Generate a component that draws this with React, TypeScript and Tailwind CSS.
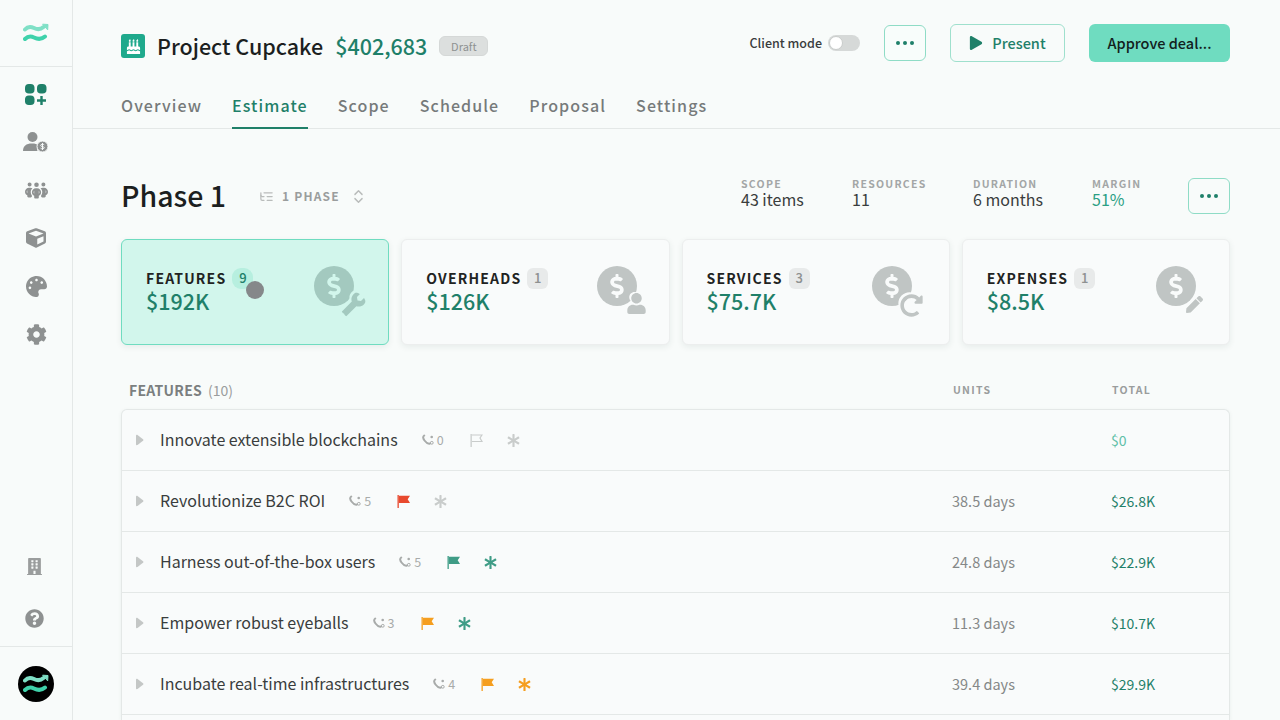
import { ReactNode } from 'react';
import { FaBuilding, FaCube, FaPalette, FaPen, FaPlay, FaAsterisk, FaUser, FaWrench, FaDollarSign } from 'react-icons/fa';
import { FaBirthdayCake, FaCog, FaQuestionCircle, FaRedoAlt } from 'react-icons/fa';
import { FaPeopleGroup } from 'react-icons/fa6';
import { LuChevronsUpDown, LuListTree } from 'react-icons/lu';

const font = 'font-["Noto_Sans_CJK_JP","Noto_Sans",sans-serif]';

const Waves = ({ className }: { className: string }) => (
  <svg viewBox="0 0 26 20" className={className} fill="none" strokeLinecap="round">
    <path d="M2 6.500c3-3.500 6-3 9-1.500s6 2 9.500-1" stroke="#7fe0c6" strokeWidth="4" />
    <path d="M20 1.200l5 .3-.3 5z" fill="#7fe0c6" stroke="#7fe0c6" strokeWidth="1" strokeLinejoin="round" />
    <path d="M2 16c3-3 6-3 9-1.500s7 2.500 11-1" stroke="#3fd2ab" strokeWidth="4" />
  </svg>
);

const UserDollar = () => (
  <svg viewBox="0 0 26 22" className="h-[22px] w-[26px]" fill="#8e9191">
    <circle cx="9.500" cy="6" r="5" />
    <path d="M0 20c0-5 3-7.500 9-7.500 3 0 5 .5 6.500 2-1.500 1.500-2 3.500-1 5.500z" />
    <circle cx="19.500" cy="15.500" r="5.500" stroke="#f8fbfa" strokeWidth="1" />
    <path d="M21.200 13.800c-.8-.8-3.500-.9-3.500.7s3.500.6 3.500 2.100-2.800 1.500-3.600.6M19.500 12v7" stroke="#f8fbfa" strokeWidth="1" fill="none" />
  </svg>
);

const GridPlus = () => (
  <svg viewBox="0 0 22 21" className="h-[21px] w-[22px]" fill="#1f8069">
    <rect x="0" y="0" width="9.500" height="9.500" rx="3.800" />
    <rect x="12" y="0" width="9.500" height="9.500" rx="3.800" />
    <rect x="0" y="11.500" width="9.500" height="9.500" rx="3.800" />
    <path d="M15.300 12h2.400v3.300H21v2.400h-3.300V21h-2.400v-3.300H12v-2.400h3.300z" />
  </svg>
);

const NavIcon = ({ children }: { children: ReactNode }) => (
  <div className="flex h-12 w-full items-center justify-center text-[22px] text-[#8e9191]">{children}</div>
);

const Sidebar = () => (
  <aside className="flex h-full w-[73px] shrink-0 flex-col border-r border-[#e4e8e7] bg-[#f8fbfa]">
    <div className="flex h-[67px] items-center justify-center border-b border-[#e4e8e7]">
      <Waves className="h-[20px] w-[26px]" />
    </div>
    <div className="flex flex-col pt-[3px]">
      <NavIcon>
        <GridPlus />
      </NavIcon>
      <NavIcon>
        <UserDollar />
      </NavIcon>
      <NavIcon>
        <FaPeopleGroup className="text-[23px]" />
      </NavIcon>
      <NavIcon>
        <FaCube className="text-[20px]" />
      </NavIcon>
      <NavIcon>
        <FaPalette className="text-[21px]" />
      </NavIcon>
      <NavIcon>
        <FaCog className="text-[21px]" />
      </NavIcon>
    </div>
    <div className="mt-auto flex flex-col items-center border-b border-[#e4e8e7]">
      <div className="flex h-[52px] w-full items-center justify-center pr-[3px] pb-[4px] text-[17px] text-[#9a9d9d]">
        <FaBuilding />
      </div>
      <div className="flex h-[52px] w-full items-center justify-center pr-[3px] pb-[4px] text-[19px] text-[#8e9191]">
        <FaQuestionCircle />
      </div>
    </div>
    <div className="flex h-[73px] items-center justify-center pr-[1px]">
      <div className="flex h-9 w-9 items-center justify-center rounded-full bg-black">
        <Waves className="h-[20px] w-[26px]" />
      </div>
    </div>
  </aside>
);

const Dots = ({ className }: { className: string }) => (
  <button className={`flex items-center justify-center gap-[3px] rounded-md border border-[#8fdcc6] ${className}`}>
    <span className="h-[4px] w-[4px] rounded-full bg-[#1f8069]" />
    <span className="h-[4px] w-[4px] rounded-full bg-[#1f8069]" />
    <span className="h-[4px] w-[4px] rounded-full bg-[#1f8069]" />
  </button>
);

const tabs = ['Overview', 'Estimate', 'Scope', 'Schedule', 'Proposal', 'Settings'];

const Header = () => (
  <header className="h-[129px] shrink-0 border-b border-[#e4e8e7] pr-[50px] pl-[48px]">
    <div className="flex h-[86px] items-center">
      <div className="mt-[6px] flex items-center">
        <div className="flex h-6 w-6 items-center justify-center rounded-[3px] bg-[#1fa98c] text-[15px] text-white">
          <FaBirthdayCake />
        </div>
        <h1 className="ml-3 text-[21.500px] leading-8 font-medium text-[#1c1f1f]">Project Cupcake</h1>
        <span className="ml-3 text-[21.500px] leading-8 font-medium text-[#1f8069]">$402,683</span>
        <span className="ml-3 flex h-5 w-[49px] items-center justify-center rounded-md border border-[#d5d8d7] bg-[#dcdfde] text-[11px] text-[#8e9191]">
          Draft
        </span>
      </div>
      <span className="ml-auto text-[12.500px] font-medium text-[#3a3d3d]">Client mode</span>
      <div className="ml-[6px] flex h-4 w-8 items-center rounded-full bg-[#d6d9d8] px-[1px]">
        <span className="h-[14px] w-[14px] rounded-full border border-[#c9cccb] bg-white" />
      </div>
      <Dots className="ml-6 h-9 w-[42px] bg-[#f8fdfb]" />
      <button className="ml-6 flex h-[38px] w-[115px] items-center justify-center gap-[9px] rounded-md border border-[#9fe0cd] text-[14.500px] font-medium text-[#1f8069]">
        <FaPlay className="text-[14px]" />
        Present
      </button>
      <button className="ml-6 h-[38px] w-[141px] rounded-md bg-[#6fdcc0] text-[14.500px] font-medium text-[#12211d]">
        Approve deal...
      </button>
    </div>
    <nav className="flex h-[43px] gap-[30px]">
      {tabs.map((tab) => (
        <div
          key={tab}
          className={`h-full pt-[4px] text-[16px] leading-[30px] font-medium tracking-[0.068em] ${
            tab === 'Estimate' ? 'border-b-2 border-[#1f8069] text-[#1f8069]' : 'text-[#767a7a]'
          }`}
        >
          {tab}
        </div>
      ))}
    </nav>
  </header>
);

const Stat = ({ label, value, green, className }: { label: string; value: string; green?: boolean; className: string }) => (
  <div className={`pb-[8px] ${className}`}>
    <div className="text-[10.500px] leading-[14px] font-semibold tracking-[0.12em] text-[#a3a6a6]">{label}</div>
    <div className={`text-[16px] leading-[17px] ${green ? 'text-[#2b9f84]' : 'text-[#3a3d3d]'}`}>{value}</div>
  </div>
);

const DollarIcon = ({ active, badge }: { active?: boolean; badge: ReactNode }) => (
  <div className={`relative mb-[2px] h-[50px] w-[50px] ${active ? 'text-[#a3c9bf]' : 'text-[#c0c5c4]'}`}>
    <div className="flex h-10 w-10 items-center justify-center rounded-full bg-current">
      <FaDollarSign className={`text-[24px] ${active ? 'text-[#d2f6ec]' : 'text-[#f9fbfb]'}`} />
    </div>
    {badge}
  </div>
);

interface Card {
  title: string;
  count: number;
  amount: string;
  active?: boolean;
  inset: string;
  badge: ReactNode;
}

const cards: Card[] = [
  {
    title: 'FEATURES',
    count: 9,
    amount: '$192K',
    active: true,
    inset: 'pr-[24px]',
    badge: <FaWrench className="absolute right-[-2px] bottom-[-2px] rounded-full text-[26px] text-[#a3c9bf] [filter:drop-shadow(-2px_-2px_0_#d2f6ec)]" />,
  },
  {
    title: 'OVERHEADS',
    count: 1,
    amount: '$126K',
    inset: 'pr-[22px]',
    badge: <FaUser className="absolute right-0 bottom-[2px] text-[21px] [filter:drop-shadow(-2px_-1px_0_#f9fbfb)]" />,
  },
  {
    title: 'SERVICES',
    count: 3,
    amount: '$75.7K',
    inset: 'pr-[27px]',
    badge: <FaRedoAlt className="absolute right-[-1px] bottom-[-1px] text-[23px] [filter:drop-shadow(-2px_-2px_0_#f9fbfb)]" />,
  },
  {
    title: 'EXPENSES',
    count: 1,
    amount: '$8.5K',
    inset: 'pr-[23px]',
    badge: <FaPen className="absolute right-[3px] bottom-[3px] text-[17px] [filter:drop-shadow(-2px_-2px_0_#f9fbfb)]" />,
  },
];

const SummaryCard = ({ card }: { card: Card }) => (
  <div
    className={`flex h-[106px] items-center justify-between rounded-md border pl-6 shadow-[0_2px_6px_rgba(30,60,50,0.08)] ${card.inset} ${
      card.active ? 'border-[#6fdcc0] bg-[#d2f6ec]' : 'border-[#eceeee] bg-[#f9fbfb]'
    }`}
  >
    <div className="mb-[5px]">
      <div className="mt-[1px] flex items-center">
        <span className="text-[14px] leading-5 font-semibold tracking-[0.085em] text-[#1f2322]">{card.title}</span>
        <span
          className={`ml-[6px] flex h-[21px] w-[21px] items-center justify-center text-[13px] font-medium ${
            card.active ? 'rounded-[9px] bg-[#b7efdf] text-[#1f8069]' : 'rounded-md bg-[#e8eaea] text-[#8e9191]'
          }`}
        >
          {card.count}
        </span>
      </div>
      <div className="text-[21.500px] leading-[24px] font-medium text-[#1f8069]">{card.amount}</div>
    </div>
    <DollarIcon active={card.active} badge={card.badge} />
  </div>
);

type Tone = 'none' | 'red' | 'green' | 'orange';

interface Row {
  name: string;
  links: number;
  flag: Tone;
  star: Tone;
  units: string;
  total: string;
}

const rows: Row[] = [
  { name: 'Innovate extensible blockchains', links: 0, flag: 'none', star: 'none', units: '', total: '$0' },
  { name: 'Revolutionize B2C ROI', links: 5, flag: 'red', star: 'none', units: '38.5 days', total: '$26.8K' },
  { name: 'Harness out-of-the-box users', links: 5, flag: 'green', star: 'green', units: '24.8 days', total: '$22.9K' },
  { name: 'Empower robust eyeballs', links: 3, flag: 'orange', star: 'green', units: '11.3 days', total: '$10.7K' },
  { name: 'Incubate real-time infrastructures', links: 4, flag: 'orange', star: 'orange', units: '39.4 days', total: '$29.9K' },
];

const toneClass: Record<Tone, string> = {
  none: 'text-[#c9cccb]',
  red: 'text-[#e8492e]',
  green: 'text-[#3f9c86]',
  orange: 'text-[#f59e1f]',
};

const Caret = () => (
  <svg viewBox="0 0 8 12" className="h-3 w-2 shrink-0" fill="#c4c7c6">
    <path d="M1.500 1 7 5.200c.5.400.5 1.200 0 1.600L1.500 11c-.6.400-1.500 0-1.500-.8V1.800C0 1 .9.600 1.500 1z" />
  </svg>
);

const PhoneDots = () => (
  <svg viewBox="0 0 12 12" className="h-3 w-3 shrink-0" fill="none" stroke="#a8abaa">
    <path d="M2.200 1.500c-1.600 1-1.200 3 .3 5s3.500 3.600 5.500 3" strokeWidth="2" strokeLinecap="round" />
    <circle cx="9.700" cy="3" r="1.300" fill="#a8abaa" stroke="none" />
    <circle cx="9.800" cy="8.800" r="1.400" strokeWidth="1" />
  </svg>
);

const Flag = ({ tone }: { tone: Tone }) => (
  <svg viewBox="0 0 13 13" className={`h-[13px] w-[13px] shrink-0 ${toneClass[tone]}`}>
    <rect x="0.500" y="0" width="1.300" height="13" fill="currentColor" />
    {tone === 'none' ? (
      <path d="M2 1h10l-2 3 2 3.500H2" fill="none" stroke="currentColor" strokeWidth="1.200" />
    ) : (
      <path d="M1.800 .8H13l-2.300 3.400L13 8H1.800z" fill="currentColor" />
    )}
  </svg>
);

const TableRow = ({ row }: { row: Row }) => (
  <div className="flex h-[61px] shrink-0 items-center border-b border-[#e4e8e7] pr-[72px] pl-[14px]">
    <Caret />
    <span className="mb-[2px] ml-[16px] text-[16px] text-[#3a3d3d]">{row.name}</span>
    <span className="ml-[24px]">
      <PhoneDots />
    </span>
    <span className="ml-[3px] text-[12.500px] text-[#a8abaa]">{row.links}</span>
    <span className="ml-[26px]">
      <Flag tone={row.flag} />
    </span>
    <FaAsterisk className={`ml-[24px] text-[13px] ${toneClass[row.star]}`} />
    <span className="ml-auto w-[159px] text-[14.500px] text-[#858888]">{row.units}</span>
    <span className={`w-[46px] text-[14px] ${row.total === '$0' ? 'text-[#5fc0a8]' : 'text-[#1f8069]'}`}>{row.total}</span>
  </div>
);

export default function App() {
  return (
    <div className={`flex h-[720px] w-[1280px] overflow-hidden bg-[#f8fbfa] ${font}`}>
      <Sidebar />
      <main className="flex min-w-0 flex-1 flex-col">
        <Header />
        <div className="flex min-h-0 flex-1 flex-col pr-[50px] pl-[48px]">
          <div className="flex h-[110px] shrink-0 items-center pt-6">
            <h2 className="mb-[2px] text-[28.500px] leading-9 font-medium text-[#1c1f1f]">Phase 1</h2>
            <LuListTree className="ml-[33px] text-[15px] text-[#b9bcbb]" />
            <span className="ml-[8px] text-[12px] font-semibold tracking-[0.1em] text-[#9a9d9d]">1 PHASE</span>
            <LuChevronsUpDown className="ml-[10px] text-[17px] text-[#b9bcbb]" />
            <Stat label="SCOPE" value="43 items" className="ml-auto w-[111px]" />
            <Stat label="RESOURCES" value="11" className="w-[121px]" />
            <Stat label="DURATION" value="6 months" className="w-[119px]" />
            <Stat label="MARGIN" value="51%" green className="w-[96px]" />
            <Dots className="h-9 w-[42px]" />
          </div>
          <div className="grid shrink-0 grid-cols-4 gap-3">
            {cards.map((card) => (
              <SummaryCard key={card.title} card={card} />
            ))}
          </div>
          <div className="flex h-[64px] shrink-0 items-end pb-[9px] pl-2">
            <span className="text-[14px] leading-5 font-semibold tracking-[0.02em] text-[#7b7f7f]">FEATURES</span>
            <span className="ml-[6px] text-[14px] leading-5 text-[#9a9d9d]">(10)</span>
            <span className="ml-auto w-[159px] text-[10.500px] leading-5 font-semibold tracking-[0.12em] text-[#9a9d9d]">UNITS</span>
            <span className="w-[118px] text-[10.500px] leading-5 font-semibold tracking-[0.12em] text-[#9a9d9d]">TOTAL</span>
          </div>
          <div className="flex min-h-0 flex-1 flex-col overflow-hidden rounded-t-md border-x border-t border-[#e4e8e7] bg-[#f9fbfb] shadow-[0_1px_4px_rgba(30,60,50,0.06)]">
            {rows.map((row) => (
              <TableRow key={row.name} row={row} />
            ))}
          </div>
        </div>
      </main>
      {/* pointer dot from the recording */}
      <div className="absolute top-[281px] left-[246px] h-[18px] w-[18px] rounded-full bg-[#85888a]" />
    </div>
  );
}
